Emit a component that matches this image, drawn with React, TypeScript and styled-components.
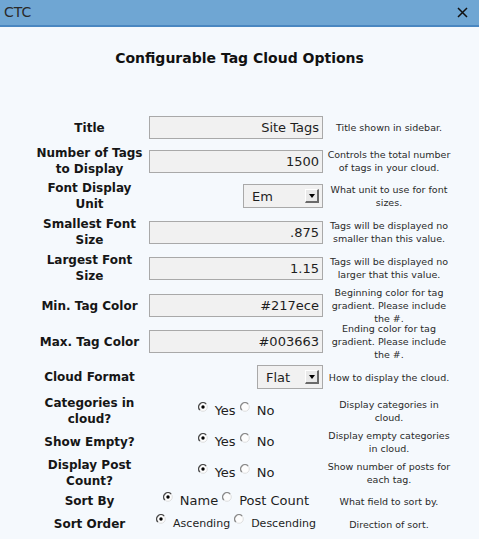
import React from 'react';
import styled, { createGlobalStyle } from 'styled-components';

const GlobalStyle = createGlobalStyle`
  html, body {
    margin: 0;
    padding: 0;
    background: #f5f9fd;
  }
  body {
    font-family: 'DejaVu Sans', Verdana, sans-serif;
    color: #1a1a1a;
  }
`;

const Window = styled.div`
  width: 479px;
  height: 539px;
  display: flex;
  flex-direction: column;
  background: #f5f9fd;
  overflow: hidden;
`;

const TitleBar = styled.div`
  height: 25px;
  display: flex;
  align-items: center;
  justify-content: space-between;
  padding: 0 11px 0 4px;
  background: #6fa6d3;
  border-bottom: 2px solid #4a87c1;

  > .title {
    font-size: 14px;
    color: #2a2a2a;
    line-height: 25px;
  }
`;

const Heading = styled.h3`
  margin: 21px 0 43px;
  text-align: center;
  font-size: 14px;
  font-weight: bold;
  line-height: 20px;
  color: #111;
`;

const Table = styled.div`
  display: flex;
  flex-direction: column;
  padding-left: 30px;
`;

const Row = styled.div<{ $h: number }>`
  display: grid;
  grid-template-columns: 119px 178px 124px;
  align-items: center;
  height: ${(p) => p.$h}px;
`;

const Label = styled.div`
  text-align: center;
  font-size: 12px;
  font-weight: bold;
  line-height: 16px;
  white-space: nowrap;
  color: #161616;
`;

const Control = styled.div<{ $align?: 'end' | 'center' }>`
  display: flex;
  justify-content: ${(p) => (p.$align === 'center' ? 'center' : 'flex-end')};
  align-items: center;
  padding-right: 4px;
`;

const TextInput = styled.div`
  box-sizing: border-box;
  width: 174px;
  height: 23px;
  border: 1px solid #a9a9a9;
  background: #f1f1f1;
  font-size: 13px;
  line-height: 21px;
  text-align: right;
  padding-right: 3px;
  color: #1e1e1e;
`;

const Select = styled.div<{ $w: number }>`
  box-sizing: border-box;
  width: ${(p) => p.$w}px;
  height: 24px;
  border: 1px solid #a9a9a9;
  background: #f1f1f1;
  display: flex;
  align-items: center;
  justify-content: space-between;
  padding: 0 3px 0 8px;
  font-size: 13px;
  color: #1e1e1e;
`;

const SelectButton = styled.span`
  box-sizing: border-box;
  width: 14px;
  height: 14px;
  display: flex;
  align-items: center;
  justify-content: center;
  background: #e9e9e9;
  border-top: 1px solid #ffffff;
  border-left: 1px solid #ffffff;
  border-right: 2px solid #6a6a6a;
  border-bottom: 2px solid #6a6a6a;

  &::after {
    content: '';
    border-left: 3.5px solid transparent;
    border-right: 3.5px solid transparent;
    border-top: 4px solid #000;
  }
`;

const RadioGroup = styled.div`
  display: flex;
  align-items: center;
  gap: 4px;
`;

const RadioItem = styled.label<{ $small?: boolean }>`
  display: flex;
  align-items: center;
  gap: 7px;
  font-size: ${(p) => (p.$small ? 11 : 13)}px;
  color: #1e1e1e;
  line-height: 16px;

  > svg {
    margin-bottom: ${(p) => (p.$small ? 10 : 8)}px;
    flex: none;
  }
`;

const Desc = styled.div`
  text-align: center;
  font-size: 9.5px;
  line-height: 13px;
  white-space: nowrap;
  color: #2a2a2a;
`;

const Radio: React.FC<{ checked?: boolean }> = ({ checked }) => (
  <svg width="10" height="10" viewBox="0 0 10 10">
    <circle cx="5" cy="5" r="4.3" fill="#fdfdfd" stroke="#d8d8d8" strokeWidth="0.8" />
    <path
      d="M1.9 8.1 A4.3 4.3 0 0 1 8.1 1.9"
      fill="none"
      stroke={checked ? '#4a4a4a' : '#8a8a8a'}
      strokeWidth="1.4"
    />
    {checked && <circle cx="5" cy="5" r="1.7" fill="#000" />}
  </svg>
);

type Field =
  | { kind: 'text'; value: string }
  | { kind: 'select'; value: string; width: number }
  | { kind: 'radio'; options: string[]; small?: boolean };

interface RowDef {
  label: string[];
  field: Field;
  desc: string[];
  h: number;
}

const rows: RowDef[] = [
  { label: ['Title'], field: { kind: 'text', value: 'Site Tags' }, desc: ['Title shown in sidebar.'], h: 33 },
  {
    label: ['Number of Tags', 'to Display'],
    field: { kind: 'text', value: '1500' },
    desc: ['Controls the total number', 'of tags in your cloud.'],
    h: 34,
  },
  {
    label: ['Font Display', 'Unit'],
    field: { kind: 'select', value: 'Em', width: 80 },
    desc: ['What unit to use for font', 'sizes.'],
    h: 36,
  },
  {
    label: ['Smallest Font', 'Size'],
    field: { kind: 'text', value: '.875' },
    desc: ['Tags will be displayed no', 'smaller than this value.'],
    h: 36,
  },
  {
    label: ['Largest Font', 'Size'],
    field: { kind: 'text', value: '1.15' },
    desc: ['Tags will be displayed no', 'larger that this value.'],
    h: 36,
  },
  {
    label: ['Min. Tag Color'],
    field: { kind: 'text', value: '#217ece' },
    desc: ['Beginning color for tag', 'gradient. Please include', 'the #.'],
    h: 36,
  },
  {
    label: ['Max. Tag Color'],
    field: { kind: 'text', value: '#003663' },
    desc: ['Ending color for tag', 'gradient. Please include', 'the #.'],
    h: 37,
  },
  {
    label: ['Cloud Format'],
    field: { kind: 'select', value: 'Flat', width: 66 },
    desc: ['How to display the cloud.'],
    h: 36,
  },
  {
    label: ['Categories in', 'cloud?'],
    field: { kind: 'radio', options: ['Yes', 'No'] },
    desc: ['Display categories in', 'cloud.'],
    h: 32,
  },
  {
    label: ['Show Empty?'],
    field: { kind: 'radio', options: ['Yes', 'No'] },
    desc: ['Display empty categories', 'in cloud.'],
    h: 30,
  },
  {
    label: ['Display Post', 'Count?'],
    field: { kind: 'radio', options: ['Yes', 'No'] },
    desc: ['Show number of posts for', 'each tag.'],
    h: 31,
  },
  {
    label: ['Sort By'],
    field: { kind: 'radio', options: ['Name', 'Post Count'] },
    desc: ['What field to sort by.'],
    h: 26,
  },
  {
    label: ['Sort Order'],
    field: { kind: 'radio', options: ['Ascending', 'Descending'], small: true },
    desc: ['Direction of sort.'],
    h: 16,
  },
];

const Lines: React.FC<{ lines: string[] }> = ({ lines }) => (
  <>
    {lines.map((l, i) => (
      <React.Fragment key={i}>
        {i > 0 && <br />}
        {l}
      </React.Fragment>
    ))}
  </>
);

const renderField = (field: Field) => {
  if (field.kind === 'text') {
    return (
      <Control>
        <TextInput>{field.value}</TextInput>
      </Control>
    );
  }
  if (field.kind === 'select') {
    return (
      <Control>
        <Select $w={field.width}>
          <span>{field.value}</span>
          <SelectButton />
        </Select>
      </Control>
    );
  }
  return (
    <Control $align="center">
      <RadioGroup>
        {field.options.map((opt, i) => (
          <RadioItem key={opt} $small={field.small}>
            <Radio checked={i === 0} />
            {opt}
          </RadioItem>
        ))}
      </RadioGroup>
    </Control>
  );
};

export default function App() {
  return (
    <Window>
      <GlobalStyle />
      <TitleBar>
        <span className="title">CTC</span>
        <svg width="11" height="11" viewBox="0 0 11 11">
          <path d="M1 1 L10 10 M10 1 L1 10" stroke="#111" strokeWidth="1.5" />
        </svg>
      </TitleBar>

      <Heading>Configurable Tag Cloud Options</Heading>

      <Table>
        {rows.map((r) => (
          <Row key={r.label.join(' ')} $h={r.h}>
            <Label>
              <Lines lines={r.label} />
            </Label>
            {renderField(r.field)}
            <Desc>
              <Lines lines={r.desc} />
            </Desc>
          </Row>
        ))}
      </Table>
    </Window>
  );
}
